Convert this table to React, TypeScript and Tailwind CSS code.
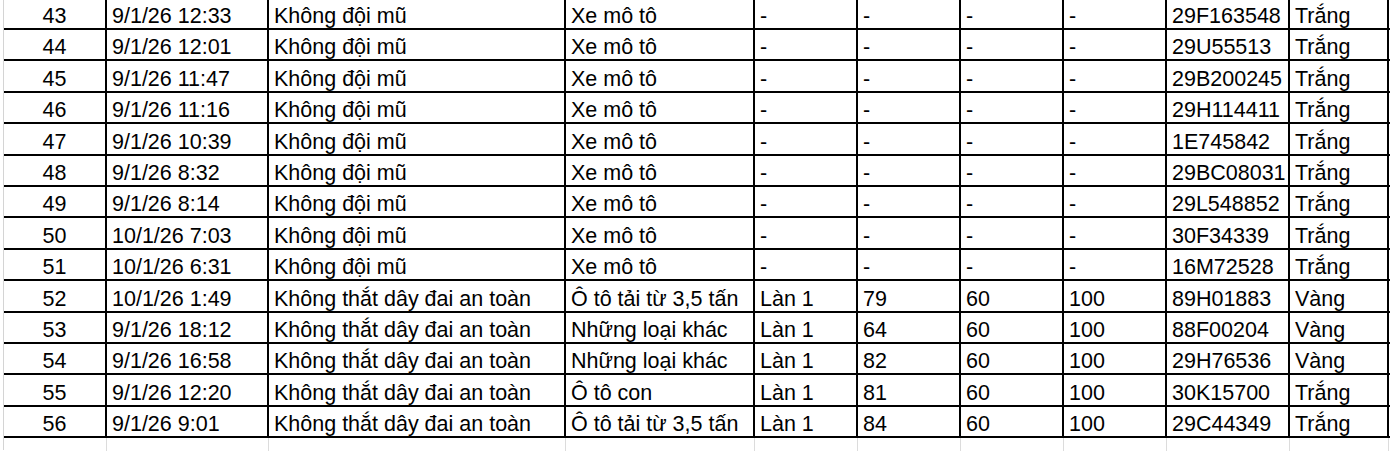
const columns = [
  "w-[103px] justify-center",
  "w-[162px] pl-[5px]",
  "w-[297px] pl-[5px]",
  "w-[189px] pl-[5px]",
  "w-[103px] pl-[5px]",
  "w-[103px] pl-[5px]",
  "w-[103px] pl-[5px]",
  "w-[103px] pl-[5px]",
  "w-[123px] pl-[5px]",
  "w-[99px] pl-[5px]",
];

const widths = [
  "w-[103px]",
  "w-[162px]",
  "w-[297px]",
  "w-[189px]",
  "w-[103px]",
  "w-[103px]",
  "w-[103px]",
  "w-[103px]",
  "w-[123px]",
  "w-[99px]",
];

const helmet = "Không đội mũ";
const belt = "Không thắt dây đai an toàn";
const moto = "Xe mô tô";

const rows: string[][] = [
  ["43", "9/1/26 12:33", helmet, moto, "-", "-", "-", "-", "29F163548", "Trắng"],
  ["44", "9/1/26 12:01", helmet, moto, "-", "-", "-", "-", "29U55513", "Trắng"],
  ["45", "9/1/26 11:47", helmet, moto, "-", "-", "-", "-", "29B200245", "Trắng"],
  ["46", "9/1/26 11:16", helmet, moto, "-", "-", "-", "-", "29H114411", "Trắng"],
  ["47", "9/1/26 10:39", helmet, moto, "-", "-", "-", "-", "1E745842", "Trắng"],
  ["48", "9/1/26 8:32", helmet, moto, "-", "-", "-", "-", "29BC08031", "Trắng"],
  ["49", "9/1/26 8:14", helmet, moto, "-", "-", "-", "-", "29L548852", "Trắng"],
  ["50", "10/1/26 7:03", helmet, moto, "-", "-", "-", "-", "30F34339", "Trắng"],
  ["51", "10/1/26 6:31", helmet, moto, "-", "-", "-", "-", "16M72528", "Trắng"],
  ["52", "10/1/26 1:49", belt, "Ô tô tải từ 3,5 tấn", "Làn 1", "79", "60", "100", "89H01883", "Vàng"],
  ["53", "9/1/26 18:12", belt, "Những loại khác", "Làn 1", "64", "60", "100", "88F00204", "Vàng"],
  ["54", "9/1/26 16:58", belt, "Những loại khác", "Làn 1", "82", "60", "100", "29H76536", "Vàng"],
  ["55", "9/1/26 12:20", belt, "Ô tô con", "Làn 1", "81", "60", "100", "30K15700", "Trắng"],
  ["56", "9/1/26 9:01", belt, "Ô tô tải từ 3,5 tấn", "Làn 1", "84", "60", "100", "29C44349", "Trắng"],
];

const App = () => {
  return (
    <div className="h-[451px] w-[1390px] overflow-hidden bg-white">
      <div className="ml-[3px] h-full border-l border-[#d4d4d4] font-['Liberation_Sans',Arial,sans-serif] text-[21.5px] leading-[24px] text-black">
        <div className="-mt-[1.4px]">
          {rows.map((row) => (
            <div key={row[0]} className="flex h-[31.4px] border-b-2 border-black">
              {row.map((cell, i) => (
                <div
                  key={i}
                  className={`flex items-end overflow-hidden whitespace-nowrap border-r-2 border-black ${columns[i]}`}
                >
                  {cell}
                </div>
              ))}
            </div>
          ))}
          {/* empty sheet row below the table */}
          <div className="flex h-[31px]">
            {widths.map((w, i) => (
              <div key={i} className={`border-r border-[#dcdcdc] ${w}`} />
            ))}
          </div>
        </div>
      </div>
    </div>
  );
};

export default App;
